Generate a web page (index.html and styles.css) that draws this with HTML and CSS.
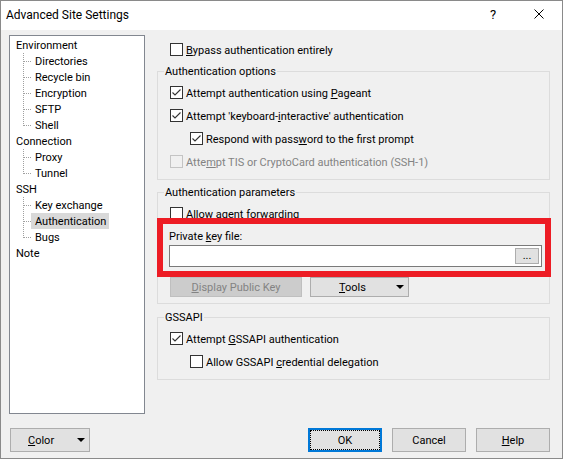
FILE: index.html
```html
<!DOCTYPE html>
<html lang="en">
<head>
    <meta charset="UTF-8">
    <title>Advanced Site Settings</title>
    <link rel="stylesheet" href="styles.css">
</head>
<body>
<div class="window">
    <div class="titlebar">
        <span class="title">Advanced Site Settings</span>
        <span class="caption-btn">?</span>
        <span class="caption-btn">
            <svg width="10" height="10" viewBox="0 0 10 10"><path d="M0.5 0.5 L9.5 9.5 M9.5 0.5 L0.5 9.5" stroke="#000" stroke-width="1" fill="none"/></svg>
        </span>
    </div>
    <div class="client">
        <ul class="tree">
            <li><span class="node">Environment</span>
                <ul>
                    <li><span class="node">Directories</span></li>
                    <li><span class="node">Recycle bin</span></li>
                    <li><span class="node">Encryption</span></li>
                    <li><span class="node">SFTP</span></li>
                    <li><span class="node">Shell</span></li>
                </ul>
            </li>
            <li><span class="node">Connection</span>
                <ul>
                    <li><span class="node">Proxy</span></li>
                    <li><span class="node">Tunnel</span></li>
                </ul>
            </li>
            <li><span class="node">SSH</span>
                <ul>
                    <li><span class="node">Key exchange</span></li>
                    <li><span class="node selected">Authentication</span></li>
                    <li><span class="node">Bugs</span></li>
                </ul>
            </li>
            <li><span class="node">Note</span></li>
        </ul>

        <div class="page">
            <label class="check top-check">
                <span class="box"></span>
                <span class="text"><u>B</u>ypass authentication entirely</span>
            </label>

            <fieldset class="group group-options">
                <legend>Authentication options</legend>
                <div class="rows">
                    <label class="check">
                        <span class="box"><svg viewBox="0 0 11 11"><path d="M1.5 5.5 L4 8 L9.5 2.5"/></svg></span>
                        <span class="text">Attempt authentication using <u>P</u>ageant</span>
                    </label>
                    <label class="check">
                        <span class="box"><svg viewBox="0 0 11 11"><path d="M1.5 5.5 L4 8 L9.5 2.5"/></svg></span>
                        <span class="text">Attempt 'keyboard-<u>i</u>nteractive' authentication</span>
                    </label>
                    <label class="check sub">
                        <span class="box"><svg viewBox="0 0 11 11"><path d="M1.5 5.5 L4 8 L9.5 2.5"/></svg></span>
                        <span class="text">Respond with pass<u>w</u>ord to the first prompt</span>
                    </label>
                    <label class="check disabled">
                        <span class="box"></span>
                        <span class="text">Atte<u>m</u>pt TIS or CryptoCard authentication (SSH-1)</span>
                    </label>
                </div>
            </fieldset>

            <fieldset class="group group-params">
                <legend>Authentication parameters</legend>
                <div class="rows">
                    <label class="check">
                        <span class="box"></span>
                        <span class="text">Allow agent <u>f</u>orwarding</span>
                    </label>
                    <div class="key-file">
                        <div class="key-label">Private <u>k</u>ey file:</div>
                        <div class="path-input">
                            <button class="browse">...</button>
                        </div>
                    </div>
                    <div class="key-buttons">
                        <button class="btn btn-disabled btn-pubkey"><u>D</u>isplay Public Key</button>
                        <button class="btn btn-menu btn-tools"><span><u>T</u>ools</span><span class="arrow"></span></button>
                    </div>
                </div>
            </fieldset>

            <fieldset class="group group-gss">
                <legend>GSSAPI</legend>
                <div class="rows">
                    <label class="check">
                        <span class="box"><svg viewBox="0 0 11 11"><path d="M1.5 5.5 L4 8 L9.5 2.5"/></svg></span>
                        <span class="text">Attempt <u>G</u>SSAPI authentication</span>
                    </label>
                    <label class="check sub">
                        <span class="box"></span>
                        <span class="text">Allow GSSAPI <u>c</u>redential delegation</span>
                    </label>
                </div>
            </fieldset>
        </div>

        <div class="footer">
            <button class="btn btn-menu btn-color"><span><u>C</u>olor</span><span class="arrow"></span></button>
            <div class="footer-actions">
                <button class="btn btn-default"><span class="focus">OK</span></button>
                <button class="btn">Cancel</button>
                <button class="btn"><u>H</u>elp</button>
            </div>
        </div>
    </div>
</div>
</body>
</html>
```

FILE: styles.css
```css
* {
    box-sizing: border-box;
}
body {
    margin: 0;
    font-family: Roboto, "Noto Sans", sans-serif;
    font-size: 11px;
    color: #000;
    background: #f0f0f0;
}
u {
    text-underline-offset: 1px;
}
.window {
    width: 563px;
    height: 459px;
    border: 1px solid #8a8a8a;
    display: flex;
    flex-direction: column;
    background: #f0f0f0;
}
.titlebar {
    flex: none;
    height: 29px;
    display: flex;
    align-items: center;
    background: #fff;
    font-size: 12px;
}
.title {
    flex: 1;
    padding: 0 0 2px 5px;
}
.caption-btn {
    width: 46px;
    height: 29px;
    display: flex;
    align-items: center;
    justify-content: center;
    padding-bottom: 3px;
    font-size: 13px;
}
.client {
    flex: 1;
    display: grid;
    grid-template-columns: 136px 1fr;
    grid-template-rows: 1fr auto;
    column-gap: 12px;
    row-gap: 14px;
    padding: 5px 12px 6px 8px;
}

/* tree on the left */
.tree {
    margin: 0;
    padding: 1px 0 0 2px;
    list-style: none;
    background: #fff;
    border: 1px solid #828790;
    line-height: 16px;
}
.tree ul {
    margin: 0;
    padding: 0;
    list-style: none;
}
.tree ul li {
    padding-left: 19px;
    background:
        repeating-linear-gradient(to bottom, #a0a0a0 0 1px, transparent 1px 2px) 11px 0 / 1px 100% no-repeat,
        repeating-linear-gradient(to right, #a0a0a0 0 1px, transparent 1px 2px) 12px 8px / 8px 1px no-repeat;
}
.tree ul li:last-child {
    background-size: 1px 9px, 8px 1px;
}
.node {
    display: inline-block;
    vertical-align: top;
    padding: 1px 3px 0 4px;
    line-height: 15px;
}
.node.selected {
    background: #d9d9d9;
}

/* right hand page */
.page {
    display: flex;
    flex-direction: column;
}
.check {
    display: flex;
    align-items: center;
    gap: 3px;
    height: 16px;
}
.check .text {
    padding-top: 2px;
}
.top-check {
    margin: 6px 0 0 13px;
}
.check.sub {
    margin-left: 20px;
}
.box {
    flex: none;
    width: 13px;
    height: 13px;
    border: 1px solid #333;
    background: #fff;
}
.box svg {
    display: block;
    width: 11px;
    height: 11px;
    fill: none;
    stroke: #333;
    stroke-width: 1.1;
}
.check.disabled {
    color: #838383;
}
.check.disabled .box {
    border-color: #c4c4c4;
    background: #f0f0f0;
}
.group {
    margin: 0;
    min-width: 0;
    border: 1px solid #dcdcdc;
    padding: 6px 7px 10px 12px;
}
.group legend {
    padding: 2px 1px 0;
    margin-left: -6px;
    line-height: 12px;
}
.group-options {
    margin-top: 7px;
}
.group-params {
    margin-top: 5px;
    padding-bottom: 6px;
}
.group-gss {
    margin-top: 6px;
}
.rows {
    display: flex;
    flex-direction: column;
    gap: 7px;
}
.key-file {
    position: relative;
    margin-left: -1px;
}
/* red marker frame around the key file field */
.key-file::after {
    content: "";
    position: absolute;
    top: -10px;
    left: -12px;
    right: -9px;
    bottom: -10px;
    border: 6px solid #ed1c24;
}
.key-label {
    padding-top: 1px;
    line-height: 15px;
}
.path-input {
    margin-top: 1px;
    height: 22px;
    border: 1px solid #7a7a7a;
    background: #fff;
    display: flex;
    justify-content: flex-end;
    padding: 2px;
}
.browse {
    width: 24px;
    height: 16px;
    padding: 0;
    border: 1px solid #adadad;
    background: #e1e1e1;
    font: inherit;
    line-height: 10px;
}
.key-buttons {
    display: flex;
    gap: 8px;
    margin-top: 3px;
}

/* buttons */
.btn {
    height: 24px;
    padding: 0;
    border: 1px solid #adadad;
    background: #e1e1e1;
    font: inherit;
    color: #000;
}
.btn-menu {
    display: flex;
    align-items: center;
    padding: 0 4px 0 17px;
}
.arrow {
    margin-left: auto;
    border-left: 4px solid transparent;
    border-right: 4px solid transparent;
    border-top: 4px solid #000;
}
.btn-pubkey {
    width: 132px;
    height: 20px;
    background: #cccccc;
    border-color: #bfbfbf;
    color: #838383;
}
.btn-tools {
    width: 99px;
    height: 20px;
    padding-left: 28px;
}
.btn-color {
    width: 80px;
    margin-left: 1px;
}
.footer {
    grid-column: 1 / -1;
    display: flex;
    justify-content: space-between;
}
.footer-actions {
    display: flex;
    gap: 10px;
}
.footer-actions .btn {
    width: 74px;
}
.btn-default {
    border: 2px solid #0078d7;
}
.btn-default .focus {
    display: flex;
    align-items: center;
    justify-content: center;
    height: 100%;
    border: 1px dotted #000;
}
```
